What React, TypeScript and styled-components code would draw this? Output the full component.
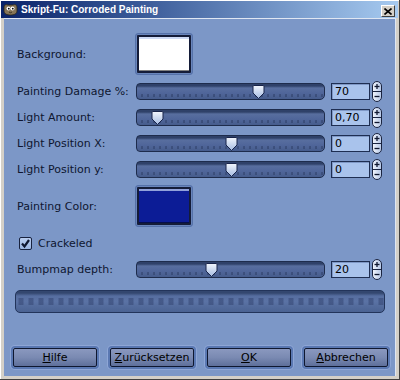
import React from "react";
import styled, { createGlobalStyle } from "styled-components";

const GlobalStyle = createGlobalStyle`
  html, body { margin: 0; padding: 0; background: #d4d0c8; }
  body { font-family: "DejaVu Sans", Verdana, sans-serif; }
`;

const Window = styled.div`
  width: 400px;
  height: 380px;
  box-sizing: border-box;
  display: flex;
  flex-direction: column;
  padding: 1px 3px 3px 4px;
  background: #d4d0c8;
  border-right: 1px solid #404040;
  border-bottom: 1px solid #404040;
  box-shadow: inset 1px 1px 0 #ffffff;
`;

const TitleBar = styled.div`
  height: 17px;
  margin: 0 -2px 0 -3px;
  display: flex;
  align-items: center;
  gap: 3px;
  padding: 0 3px 0 2px;
  background: linear-gradient(to right, #0a246a 0%, #3a5a98 35%, #a6caf0 100%);
`;

const TitleText = styled.span`
  flex: 1;
  color: #ffffff;
  font-family: "Liberation Sans", Arial, sans-serif;
  font-weight: bold;
  font-size: 10px;
  line-height: 17px;
  white-space: nowrap;
`;

const CloseButton = styled.div`
  width: 14px;
  height: 12px;
  box-sizing: border-box;
  margin-top: 3px;
  display: flex;
  align-items: center;
  justify-content: center;
  background: #d4d0c8;
  border-top: 1px solid #ffffff;
  border-left: 1px solid #ffffff;
  border-right: 1px solid #404040;
  border-bottom: 1px solid #404040;
`;

const Client = styled.div`
  flex: 1;
  display: flex;
  flex-direction: column;
  background: #7c97c7;
  border-top: 1px solid #dfe6f2;
  border-right: 1px solid #dfe6f2;
  padding: 14px 5px 6px 7px;
`;

const Form = styled.div`
  display: flex;
  flex-direction: column;
  gap: 6px;
  padding: 0 5px 0 4px;
`;

const Field = styled.div`
  display: grid;
  grid-template-columns: 121px auto;
  align-items: center;
`;

const Label = styled.span<{ $flush?: boolean }>`
  padding-left: ${(p) => (p.$flush ? 0 : 2)}px;
  font-size: 11px;
  color: #0e1630;
  white-space: nowrap;
`;

const SwatchButton = styled.div<{ $color: string }>`
  width: 58px;
  height: 42px;
  box-sizing: border-box;
  margin-left: -1px;
  padding: 2px;
  border-radius: 4px;
  background: #6a86bc;
  box-shadow: inset 0 0 0 1px #5571a8;
  &::after {
    content: "";
    display: block;
    height: 100%;
    box-sizing: border-box;
    border: 2px solid #141c38;
    border-radius: 1px;
    background: ${(p) => p.$color};
    box-shadow: inset 0 2px 0 rgba(190, 205, 240, 0.75), inset 0 -1px 0 rgba(0, 0, 0, 0.5);
  }
`;

const SliderRow = styled.div`
  display: grid;
  grid-template-columns: 121px 189px 6px 39px 2px 10px;
  align-items: center;
  height: 20px;
`;

const Track = styled.div`
  grid-column: 2;
  position: relative;
  height: 17px;
  box-sizing: border-box;
  border: 1px solid #1e2c4c;
  border-radius: 4px 5px 5px 4px;
  background:
    repeating-linear-gradient(90deg, transparent 0 4px, rgba(30, 44, 80, 0.35) 4px 6px) 0 calc(100% - 2px) / 100% 3px no-repeat,
    linear-gradient(#2f4169 0, #2f4169 2px, #586e9f 4px, #50669a 9px, #465c8c 100%);
`;

const Thumb = styled.svg`
  position: absolute;
  top: 1px;
  width: 13px;
  height: 14px;
`;

const Entry = styled.div`
  grid-column: 4;
  height: 17px;
  box-sizing: border-box;
  padding-left: 3px;
  border: 1px solid #1e2e52;
  background: #a9c3ec;
  box-shadow: inset 1px 1px 0 #7f98c6;
  font-size: 11px;
  line-height: 15px;
  color: #000000;
`;

const Spin = styled.svg`
  grid-column: 6;
  width: 10px;
  height: 21px;
`;

const CheckRow = styled.label`
  display: flex;
  align-items: center;
  gap: 6px;
  height: 20px;
  padding-left: 4px;
`;

const CheckBox = styled.span`
  width: 13px;
  height: 13px;
  box-sizing: border-box;
  display: flex;
  align-items: center;
  justify-content: center;
  border: 1px solid #18223e;
  border-radius: 2px;
  background: linear-gradient(#b9cdef, #9ab4e0);
`;

const Progress = styled.div`
  margin-top: 5px;
  height: 23px;
  box-sizing: border-box;
  border: 1px solid #22345a;
  border-radius: 5px;
  background:
    repeating-linear-gradient(90deg, transparent 0 2px, rgba(44, 60, 104, 0.45) 3px 7px, transparent 8px 10px) 0 50% / 100% 7px no-repeat,
    linear-gradient(#33476f 0, #33476f 2px, #566ea0 5px, #5a72a4 50%, #4a6292 100%);
`;

const ButtonRow = styled.div`
  margin-top: auto;
  display: flex;
  justify-content: space-between;
  padding: 3px 2px;
`;

const DialogButton = styled.button`
  width: 84px;
  height: 19px;
  box-sizing: border-box;
  padding: 0;
  border: 1px solid #0f1830;
  border-radius: 2px;
  background: linear-gradient(#8a98bf 0%, #7a8ab2 50%, #5e6f9a 100%);
  box-shadow: 0 0 0 2px #5a78b2, 0 0 0 3px #8ea6d6;
  font-family: "DejaVu Sans", Verdana, sans-serif;
  font-size: 11px;
  color: #000000;
  line-height: 17px;
`;

const GimpIcon = () => (
  <svg width="15" height="13" viewBox="0 0 15 13">
    <path d="M1 4 C1 2 3 1 5 2 L10 2 C12 1 14 2 14 4 L14 8 C14 11 11 12 7.5 12 C4 12 1 11 1 8 Z" fill="#857558" stroke="#2a2418" strokeWidth="0.8" />
    <circle cx="5.5" cy="5.5" r="2" fill="#ffffff" />
    <circle cx="9.5" cy="5.5" r="2" fill="#ffffff" />
    <circle cx="5.8" cy="5.7" r="0.9" fill="#000" />
    <circle cx="9.8" cy="5.7" r="0.9" fill="#000" />
    <path d="M6 9 Q7.5 10.5 9 9" stroke="#2a2418" strokeWidth="0.8" fill="none" />
  </svg>
);

const ThumbShape = ({ frac }: { frac: number }) => (
  <Thumb viewBox="0 0 13 14" style={{ left: `${Math.round(frac * (187 - 13))}px` }}>
    <defs>
      <linearGradient id="tg" x1="0" y1="0" x2="0" y2="1">
        <stop offset="0" stopColor="#f2f6fd" />
        <stop offset="1" stopColor="#a5bbe2" />
      </linearGradient>
    </defs>
    <path d="M1 1.5 Q1 0.5 2 0.5 H11 Q12 0.5 12 1.5 V8 L6.5 13.5 L1 8 Z" fill="url(#tg)" stroke="#18244a" strokeWidth="1" />
  </Thumb>
);

const SpinPill = () => (
  <Spin viewBox="0 0 10 21">
    <defs>
      <linearGradient id="sg" x1="0" y1="0" x2="1" y2="0">
        <stop offset="0" stopColor="#f4f7fd" />
        <stop offset="1" stopColor="#b4c6e6" />
      </linearGradient>
    </defs>
    <rect x="0.5" y="0.5" width="9" height="20" rx="4.5" fill="url(#sg)" stroke="#1a2440" />
    <line x1="1" y1="10.5" x2="9" y2="10.5" stroke="#1a2440" />
    <line x1="2.5" y1="5.5" x2="7.5" y2="5.5" stroke="#101830" strokeWidth="1.3" />
    <line x1="5" y1="3" x2="5" y2="8" stroke="#101830" strokeWidth="1.3" />
    <line x1="2.5" y1="15.5" x2="7.5" y2="15.5" stroke="#101830" strokeWidth="1.3" />
  </Spin>
);

type SliderData = { label: string; value: string; frac: number };

const sliders: SliderData[] = [
  { label: "Painting Damage %:", value: "70", frac: 0.662 },
  { label: "Light Amount:", value: "0,70", frac: 0.082 },
  { label: "Light Position X:", value: "0", frac: 0.503 },
  { label: "Light Position y:", value: "0", frac: 0.503 },
];

const SliderField = ({ label, value, frac }: SliderData) => (
  <SliderRow>
    <Label>{label}</Label>
    <Track>
      <ThumbShape frac={frac} />
    </Track>
    <Entry>{value}</Entry>
    <SpinPill />
  </SliderRow>
);

export default function App() {
  return (
    <>
      <GlobalStyle />
      <Window>
        <TitleBar>
          <GimpIcon />
          <TitleText>Skript-Fu: Corroded Painting</TitleText>
          <CloseButton>
            <svg width="8" height="7" viewBox="0 0 8 7">
              <path d="M0.5 0.5 L7.5 6.5 M7.5 0.5 L0.5 6.5" stroke="#000" strokeWidth="1.6" />
            </svg>
          </CloseButton>
        </TitleBar>
        <Client>
          <Form>
            <Field>
              <Label>Background:</Label>
              <SwatchButton $color="#ffffff" />
            </Field>
            {sliders.map((s) => (
              <SliderField key={s.label} {...s} />
            ))}
            <Field>
              <Label>Painting Color:</Label>
              <SwatchButton $color="#0c1c96" />
            </Field>
            <CheckRow>
              <CheckBox>
                <svg width="11" height="11" viewBox="0 0 11 11">
                  <path d="M2 5.5 L4.5 8.5 L9 2" stroke="#0e1630" strokeWidth="2.2" fill="none" />
                </svg>
              </CheckBox>
              <Label $flush>Crackeled</Label>
            </CheckRow>
            <SliderField label="Bumpmap depth:" value="20" frac={0.389} />
            <Progress />
          </Form>
          <ButtonRow>
            <DialogButton><u>H</u>ilfe</DialogButton>
            <DialogButton><u>Z</u>urücksetzen</DialogButton>
            <DialogButton><u>O</u>K</DialogButton>
            <DialogButton><u>A</u>bbrechen</DialogButton>
          </ButtonRow>
        </Client>
      </Window>
    </>
  );
}
